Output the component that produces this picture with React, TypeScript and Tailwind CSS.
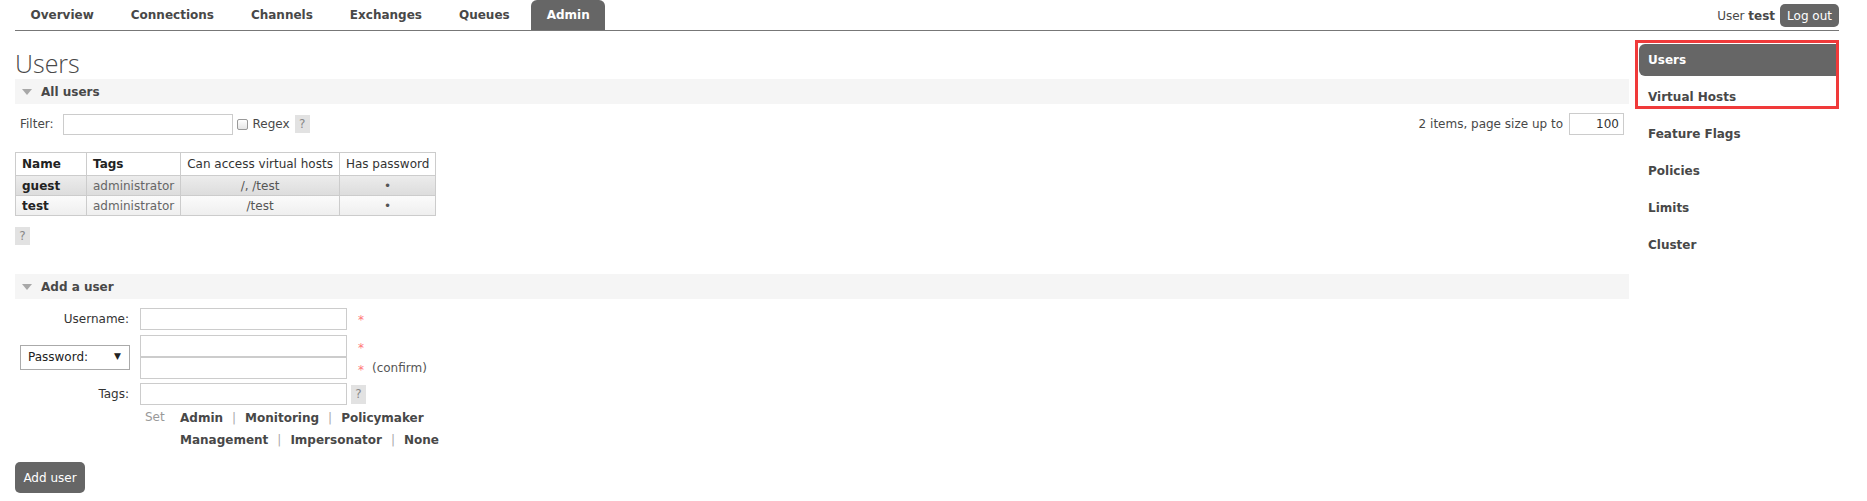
import React from "react";

const tabs = ["Overview", "Connections", "Channels", "Exchanges", "Queues", "Admin"];
const sideItems = ["Users", "Virtual Hosts", "Feature Flags", "Policies", "Limits", "Cluster"];

const Help = ({ className = "" }: { className?: string }) => (
  <span
    className={`inline-flex items-center justify-center w-[15px] h-[18px] bg-[#e2e2e2] text-[#888] text-[12px] ${className}`}
  >
    ?
  </span>
);

const Triangle = () => (
  <svg width="10" height="6" viewBox="0 0 10 6">
    <path d="M0 0h10L5 6z" fill="#a8a8a8" />
  </svg>
);

const SectionBar = ({ title }: { title: string }) => (
  <div className="flex items-center gap-[9px] h-[25px] pl-[7px] bg-[#f5f5f5]">
    <Triangle />
    <span className="font-bold text-[#484848]">{title}</span>
  </div>
);

const Field = ({ className = "" }: { className?: string }) => (
  <input
    readOnly
    className={`block w-[207px] h-[22px] border border-[#ccc] bg-white outline-none ${className}`}
  />
);

const Star = () => <span className="text-[#f77] text-[12px] leading-none">*</span>;

const cell = "border border-[#ccc] px-[6px] whitespace-nowrap";

export default function App() {
  return (
    <div className="w-[1867px] h-[501px] bg-white text-[12px] text-[#484848] font-['DejaVu_Sans',Verdana,sans-serif] overflow-hidden">
      {/* top bar */}
      <div className="flex justify-between h-[31px] ml-[15px] mr-[28px] border-b border-[#777]">
        <ul className="flex gap-[6px]">
          {tabs.map((t) => (
            <li
              key={t}
              className={`flex items-center px-[15.5px] h-[30px] font-bold rounded-t-[6px] ${
                t === "Admin" ? "bg-[#666] text-white" : "text-[#484848]"
              }`}
            >
              {t}
            </li>
          ))}
        </ul>
        <div className="flex items-center gap-[5px] h-[23px] mt-[4px]">
          <span>
            User <b>test</b>
          </span>
          <span className="flex items-center h-[23px] px-[7px] rounded-[5px] bg-[#666] text-white">
            Log out
          </span>
        </div>
      </div>

      <div className="flex gap-[10px] ml-[15px] mr-[28px]">
        {/* main */}
        <div className="flex-1">
          <h1 className="mt-[17px] text-[25px] leading-[30px] font-light text-[#484848] font-['Open_Sans',sans-serif]">
            Users
          </h1>
          <div className="mt-[1px]">
            <SectionBar title="All users" />
          </div>

          <div className="flex items-center justify-between h-[22px] mt-[9px]">
            <div className="flex items-center pl-[5px]">
              <span>Filter:</span>
              <input readOnly className="ml-[9px] w-[170px] h-[21px] border border-[#ccc] outline-none" />
              <span className="ml-[4px] w-[11px] h-[11px] border border-[#999] rounded-[2px] bg-gradient-to-b from-white to-[#e6e6e6]" />
              <span className="ml-[5px]">Regex</span>
              <Help className="ml-[5px]" />
            </div>
            <div className="flex items-center pr-[5px]">
              <span>2 items, page size up to</span>
              <span className="ml-[6px] flex items-center justify-end w-[55px] h-[22px] border border-[#ccc] pr-[4px] text-[#333]">
                100
              </span>
            </div>
          </div>

          <table className="mt-[17px] border-collapse">
            <thead>
              <tr className="h-[23px]">
                <th className={`${cell} w-[71px] text-left font-bold text-[#222]`}>Name</th>
                <th className={`${cell} w-[92px] text-left font-bold text-[#222]`}>Tags</th>
                <th className={`${cell} font-normal text-[#333]`}>Can access virtual hosts</th>
                <th className={`${cell} px-[5px] font-normal text-[#333]`}>Has password</th>
              </tr>
            </thead>
            <tbody>
              <tr className="h-[20px] bg-gradient-to-b from-[#ececec] to-[#dcdcdc]">
                <td className={`${cell} font-bold text-[#222]`}>guest</td>
                <td className={`${cell} text-[#666]`}>administrator</td>
                <td className={`${cell} text-center text-[#555]`}>/, /test</td>
                <td className={`${cell} text-center text-[#555]`}>•</td>
              </tr>
              <tr className="h-[20px] bg-gradient-to-b from-[#fbfbfb] to-[#eeeeee]">
                <td className={`${cell} font-bold text-[#222]`}>test</td>
                <td className={`${cell} text-[#666]`}>administrator</td>
                <td className={`${cell} text-center text-[#555]`}>/test</td>
                <td className={`${cell} text-center text-[#555]`}>•</td>
              </tr>
            </tbody>
          </table>
          <Help className="mt-[11px]" />

          <div className="mt-[29px]">
            <SectionBar title="Add a user" />
          </div>

          {/* form */}
          <div className="mt-[9px] flex flex-col">
            <div className="flex items-center h-[22px]">
              <label className="w-[115px] pr-[1px] text-right text-[#333]">Username:</label>
              <Field className="ml-[10px]" />
              <span className="ml-[11px] self-start mt-[3px]"><Star /></span>
            </div>

            <div className="flex items-center mt-[5px]">
              <div className="w-[115px] flex justify-end">
                <div className="flex items-center justify-between w-[110px] h-[25px] border border-[#aaa] pl-[7px] pr-[8px] text-[#222]">
                  <span>Password:</span>
                  <span className="text-[9px]">▼</span>
                </div>
              </div>
              <div className="ml-[10px] flex flex-col">
                <div className="flex items-start">
                  <Field />
                  <span className="ml-[11px] mt-[4px]"><Star /></span>
                </div>
                <div className="flex items-start">
                  <Field />
                  <span className="ml-[11px] mt-[4px]"><Star /></span>
                  <span className="ml-[8px] mt-[2px] text-[#555]">(confirm)</span>
                </div>
              </div>
            </div>

            <div className="flex items-center h-[22px] mt-[4px]">
              <label className="w-[115px] pr-[1px] text-right text-[#333]">Tags:</label>
              <Field className="ml-[10px]" />
              <Help className="ml-[4px] h-[19px]" />
            </div>

            <div className="flex mt-[2px] ml-[130px]">
              <span className="w-[35px] text-[#999] leading-[20px]">Set</span>
              <div className="flex flex-col font-bold text-[#484848] leading-[22px]">
                <div className="flex gap-[9px]">
                  <span>Admin</span>
                  <span className="font-normal text-[#aaa]">|</span>
                  <span>Monitoring</span>
                  <span className="font-normal text-[#aaa]">|</span>
                  <span>Policymaker</span>
                </div>
                <div className="flex gap-[9px]">
                  <span>Management</span>
                  <span className="font-normal text-[#aaa]">|</span>
                  <span>Impersonator</span>
                  <span className="font-normal text-[#aaa]">|</span>
                  <span>None</span>
                </div>
              </div>
            </div>

            <div className="mt-[11px]">
              <span className="inline-flex items-center justify-center w-[70px] h-[31px] rounded-[5px] bg-[#666] text-white">
                Add user
              </span>
            </div>
          </div>
        </div>

        {/* sidebar */}
        <div className="relative w-[200px] mt-[13px]">
          <ul className="flex flex-col gap-[5px]">
            {sideItems.map((s) => (
              <li
                key={s}
                className={`flex items-center h-[32px] pl-[9px] font-bold ${
                  s === "Users" ? "bg-[#666] text-white rounded-l-[6px]" : "text-[#484848]"
                }`}
              >
                {s}
              </li>
            ))}
          </ul>
          <div className="absolute -left-[4px] -top-[4px] w-[204px] h-[69px] border-[3px] border-[#f03a3a]" />
        </div>
      </div>
    </div>
  );
}
